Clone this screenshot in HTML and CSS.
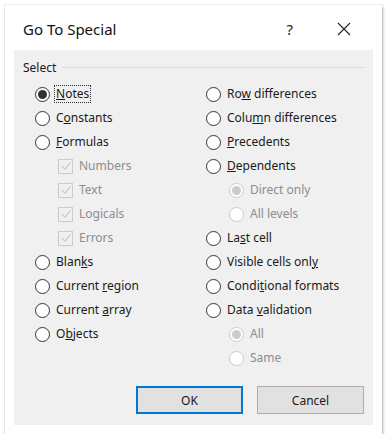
FILE: index.html
```html
<!DOCTYPE html>
<html>
<head>
<meta charset="utf-8">
<link rel="stylesheet" href="styles.css">
</head>
<body>
<div class="dialog">
  <div class="titlebar">
    <span class="title">Go To Special</span>
    <span class="help">?</span>
    <svg class="close" width="14" height="14" viewBox="0 0 14 14"><path d="M1 1L13 13M13 1L1 13" stroke="#222" stroke-width="1.1" fill="none"/></svg>
  </div>
  <div class="panel">
    <div class="group-head"><span class="group-label">Select</span><span class="group-line"></span></div>
    <div class="columns">
      <div class="col col-left">
        <div class="row"><span class="radio checked"></span><span class="label focus"><u>N</u>otes</span></div>
        <div class="row"><span class="radio"></span><span class="label">C<u>o</u>nstants</span></div>
        <div class="row"><span class="radio"></span><span class="label"><u>F</u>ormulas</span></div>
        <div class="row sub"><span class="check"><svg width="12" height="12" viewBox="0 0 12 12"><path d="M2 6.2L4.8 9L10.5 2.8" stroke="#c4c4c4" stroke-width="1.1" fill="none"/></svg></span><span class="label dis">Numbers</span></div>
        <div class="row sub"><span class="check"><svg width="12" height="12" viewBox="0 0 12 12"><path d="M2 6.2L4.8 9L10.5 2.8" stroke="#c4c4c4" stroke-width="1.1" fill="none"/></svg></span><span class="label dis">Text</span></div>
        <div class="row sub"><span class="check"><svg width="12" height="12" viewBox="0 0 12 12"><path d="M2 6.2L4.8 9L10.5 2.8" stroke="#c4c4c4" stroke-width="1.1" fill="none"/></svg></span><span class="label dis">Logicals</span></div>
        <div class="row sub"><span class="check"><svg width="12" height="12" viewBox="0 0 12 12"><path d="M2 6.2L4.8 9L10.5 2.8" stroke="#c4c4c4" stroke-width="1.1" fill="none"/></svg></span><span class="label dis">Errors</span></div>
        <div class="row"><span class="radio"></span><span class="label">Blan<u>k</u>s</span></div>
        <div class="row"><span class="radio"></span><span class="label">Current <u>r</u>egion</span></div>
        <div class="row"><span class="radio"></span><span class="label">Current <u>a</u>rray</span></div>
        <div class="row"><span class="radio"></span><span class="label">O<u>b</u>jects</span></div>
      </div>
      <div class="col col-right">
        <div class="row"><span class="radio"></span><span class="label">Ro<u>w</u> differences</span></div>
        <div class="row"><span class="radio"></span><span class="label">Colu<u>m</u>n differences</span></div>
        <div class="row"><span class="radio"></span><span class="label"><u>P</u>recedents</span></div>
        <div class="row"><span class="radio"></span><span class="label"><u>D</u>ependents</span></div>
        <div class="row sub"><span class="radio dis checked"></span><span class="label dis">Direct only</span></div>
        <div class="row sub"><span class="radio dis"></span><span class="label dis">All levels</span></div>
        <div class="row"><span class="radio"></span><span class="label">La<u>s</u>t cell</span></div>
        <div class="row"><span class="radio"></span><span class="label">Visible cells onl<u>y</u></span></div>
        <div class="row"><span class="radio"></span><span class="label">Condi<u>t</u>ional formats</span></div>
        <div class="row"><span class="radio"></span><span class="label">Data <u>v</u>alidation</span></div>
        <div class="row sub"><span class="radio dis checked"></span><span class="label dis">All</span></div>
        <div class="row sub"><span class="radio dis"></span><span class="label dis">Same</span></div>
      </div>
    </div>
    <div class="buttons">
      <button class="btn default">OK</button>
      <button class="btn">Cancel</button>
    </div>
  </div>
</div>
</body>
</html>
```
FILE: styles.css
```css
html, body {
  margin: 0;
  padding: 0;
  background: #ffffff;
}
body {
  font-family: "Noto Sans", "Open Sans", sans-serif;
  font-size: 12px;
  color: #1a1a1a;
}
.dialog {
  margin: 5px 0 0 5px;
  width: 377px;
  height: 429px;
  background: #ffffff;
  box-shadow: 0 0 0 1px rgba(0,0,0,0.06), 1px 2px 3px rgba(0,0,0,0.28);
  display: flex;
  flex-direction: column;
}
.titlebar {
  height: 45px;
  display: flex;
  align-items: center;
  padding: 0 0 0 18px;
}
.title {
  font-size: 15px;
  color: #111;
  flex: 1;
  padding-top: 2px;
}
.help {
  font-size: 15px;
  color: #222;
  margin-right: 44px;
  padding-top: 2px;
}
.close {
  margin-right: 31px;
  margin-top: 2px;
}
.panel {
  flex: 1;
  margin: 0 9px 9px 9px;
  background: #f0f0f0;
  display: flex;
  flex-direction: column;
}
.group-head {
  display: flex;
  align-items: center;
  height: 22px;
  margin-top: 6px;
  padding: 0 8px 0 9px;
}
.group-label {
  color: #1a1a1a;
}
.group-line {
  flex: 1;
  height: 1px;
  background: #dcdcdc;
  margin-left: 6px;
  margin-top: 1px;
}
.columns {
  display: flex;
  margin-top: 4px;
}
.col-left {
  width: 171px;
  padding-left: 21px;
}
.col {
  display: flex;
  flex-direction: column;
}
.row {
  height: 24px;
  display: flex;
  align-items: center;
}
.row.sub {
  padding-left: 23px;
}
.radio {
  width: 13px;
  height: 13px;
  border: 1px solid #333;
  border-radius: 50%;
  background: #fff;
  margin-right: 6px;
  display: flex;
  align-items: center;
  justify-content: center;
  flex: none;
}
.radio.checked::after {
  content: "";
  width: 9px;
  height: 9px;
  border-radius: 50%;
  background: #333;
}
.radio.dis {
  border-color: #cccccc;
}
.radio.dis.checked::after {
  background: #cccccc;
}
.check {
  width: 13px;
  height: 13px;
  border: 1px solid #cccccc;
  background: #f0f0f0;
  margin-right: 6px;
  display: flex;
  align-items: center;
  justify-content: center;
  flex: none;
}
.label {
  line-height: 16px;
}
.label.dis {
  color: #8d8d8d;
}
.label.focus {
  outline: 1px dotted #333;
  outline-offset: 0;
  padding: 0 1px;
  margin-left: -1px;
}
.label u {
  text-decoration-thickness: 1px;
  text-underline-offset: 1px;
}
.buttons {
  margin-top: auto;
  margin-bottom: 11px;
  display: flex;
  justify-content: flex-end;
  gap: 14px;
  padding-right: 9px;
}
.btn {
  width: 107px;
  height: 28px;
  font-family: inherit;
  font-size: 12px;
  color: #1a1a1a;
  background: #e1e1e1;
  border: 1px solid #adadad;
  padding: 0;
}
.btn.default {
  border: 2px solid #0078d7;
}
```
